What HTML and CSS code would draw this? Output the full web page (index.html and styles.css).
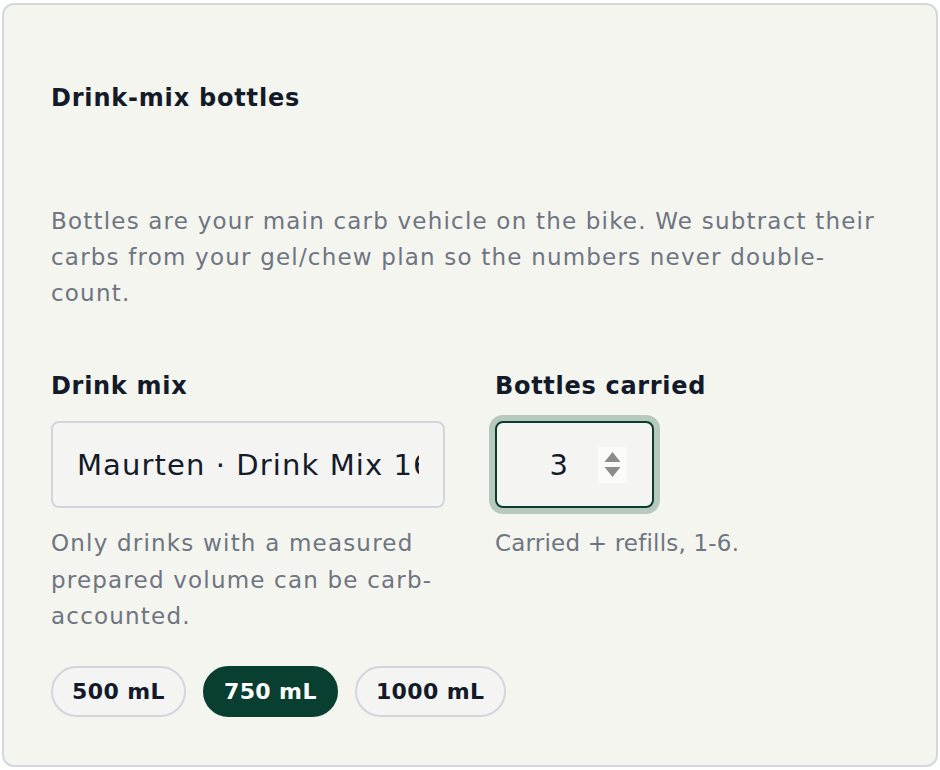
FILE: index.html
```html
<!DOCTYPE html>
<html>
<head>
<meta charset="utf-8">
<link rel="stylesheet" href="styles.css">
</head>
<body>
<section class="card">
  <h2 class="title">Drink-mix bottles</h2>
  <p class="desc">Bottles are your main carb vehicle on the bike. We subtract their carbs from your gel/chew plan so the numbers never double-count.</p>
  <div class="grid">
    <div class="field">
      <label class="label">Drink mix</label>
      <input class="text-input" type="text" value="Maurten · Drink Mix 160">
      <p class="help">Only drinks with a measured prepared volume can be carb-accounted.</p>
    </div>
    <div class="field">
      <label class="label">Bottles carried</label>
      <div class="num-ring">
        <div class="num-input">
          <span class="num-value">3</span>
          <span class="spinner">
            <svg width="29" height="36" viewBox="0 0 29 36">
              <rect width="29" height="36" fill="#fbfbfa"/>
              <polygon points="14.5,5 22.5,15 6.5,15" fill="#8c8c8c"/>
              <polygon points="6.5,20 22.5,20 14.5,30" fill="#8c8c8c"/>
            </svg>
          </span>
        </div>
      </div>
      <p class="help help-short">Carried + refills, 1-6.</p>
    </div>
  </div>
  <div class="pills">
    <button class="pill">500 mL</button>
    <button class="pill pill-active">750 mL</button>
    <button class="pill">1000 mL</button>
  </div>
</section>
</body>
</html>
```
FILE: styles.css
```css
* { box-sizing: border-box; }
html, body { margin: 0; background: #ffffff; }
body {
  padding: 3px 2px 0 2px;
  font-family: "DejaVu Sans", "Noto Sans", sans-serif;
}
.card {
  width: 936px;
  height: 764px;
  border: 2px solid #d4d7de;
  border-radius: 12px;
  background: #f3f5ee;
  padding: 79px 47px 0 47px;
}
.title {
  margin: 0;
  font-size: 24px;
  line-height: 29px;
  font-weight: 700;
  letter-spacing: 0.8px;
  color: #131a29;
}
.desc {
  margin: 90px 0 0 0;
  font-size: 23px;
  line-height: 36px;
  letter-spacing: 1.2px;
  color: #6e7481;
}
.grid {
  margin-top: 61px;
  display: grid;
  grid-template-columns: 1fr 1fr;
  column-gap: 50px;
}
.field { display: flex; flex-direction: column; align-items: flex-start; }
.label {
  font-size: 24px;
  line-height: 29px;
  font-weight: 700;
  letter-spacing: 0.7px;
  color: #131a29;
}
.text-input {
  margin-top: 20px;
  width: 100%;
  height: 87px;
  border: 2px solid #d3d5dc;
  border-radius: 8px;
  background: #f4f4f2;
  padding: 0 24px;
  font-family: "DejaVu Sans", "Noto Sans", sans-serif;
  font-size: 29px;
  letter-spacing: 1.1px;
  color: #131a29;
  outline: none;
}
.num-ring {
  margin-top: 14px;
  margin-left: -6px;
  padding: 6px;
  border-radius: 14px;
  background: #b7c8bd;
}
.num-input {
  width: 159px;
  height: 87px;
  border: 2px solid #0b3d2e;
  border-radius: 8px;
  background: #f4f4f2;
  display: flex;
  align-items: center;
  justify-content: flex-end;
  padding-right: 25px;
  gap: 30px;
}
.num-value {
  font-size: 29px;
  color: #131a29;
}
.spinner { display: flex; }
.help {
  margin: 17px 0 0 0;
  font-size: 23px;
  line-height: 36.5px;
  letter-spacing: 1.2px;
  color: #6e7481;
}
.help-short {
  margin-top: 11px;
  letter-spacing: 0.2px;
}
.pills {
  margin-top: 31px;
  display: flex;
  gap: 17px;
}
.pill {
  height: 51px;
  padding: 0 19px;
  border: 2px solid #d3d5dc;
  border-radius: 26px;
  background: #f4f4f2;
  font-family: "DejaVu Sans", "Noto Sans", sans-serif;
  font-size: 22px;
  font-weight: 700;
  letter-spacing: 0.4px;
  color: #131a29;
}
.pill-active {
  background: #083f30;
  border-color: #083f30;
  color: #ffffff;
}
```
